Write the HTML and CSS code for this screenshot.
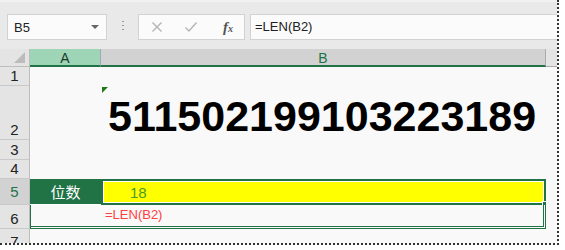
FILE: index.html
```html
<!DOCTYPE html>
<html lang="zh-CN">
<head>
  <meta charset="UTF-8">
  <title>LEN</title>
  <link rel="stylesheet" href="styles.css">
</head>
<body>
  <div class="sheet">
    <!-- 编辑栏 -->
    <div class="toolbar">
      <div class="namebox">
        <span>B5</span>
        <span class="caret"></span>
      </div>
      <div class="grip"></div>
      <div class="fbuttons">
        <svg class="ico" width="12" height="12" viewBox="0 0 12 12"><path d="M1.5 1.5 L10.5 10.5 M10.5 1.5 L1.5 10.5" stroke="#b4b4b4" stroke-width="1.4" fill="none"/></svg>
        <svg class="ico" width="14" height="12" viewBox="0 0 14 12"><path d="M1.5 6.5 L5 10 L12.5 1.5" stroke="#b4b4b4" stroke-width="1.4" fill="none"/></svg>
        <span class="fx">f<small>x</small></span>
      </div>
      <div class="formula">=LEN(B2)</div>
    </div>

    <!-- 表格 -->
    <div class="grid">
      <div class="corner"><span></span></div>
      <div class="colhead sel">A</div>
      <div class="colhead cur">B</div>
      <div class="colhead rest"></div>

      <div class="rowhead">1</div>
      <div class="cell"></div>
      <div class="cell"></div>
      <div class="cell"></div>

      <div class="rowhead">2</div>
      <div class="cell"></div>
      <div class="cell big"><span class="flag"></span>511502199103223189</div>
      <div class="cell"></div>

      <div class="rowhead">3</div>
      <div class="cell"></div>
      <div class="cell"></div>
      <div class="cell"></div>

      <div class="rowhead">4</div>
      <div class="cell"></div>
      <div class="cell"></div>
      <div class="cell"></div>

      <div class="rowhead active">5</div>
      <div class="cell label">位数</div>
      <div class="cell result"><span>18</span><i class="handle"></i></div>
      <div class="cell"></div>

      <div class="rowhead">6</div>
      <div class="cell note">=LEN(B2)</div>
      <div class="cell"></div>

      <div class="rowhead cut">7</div>
      <div class="cell"></div>
      <div class="cell"></div>
      <div class="cell"></div>
    </div>
  </div>
</body>
</html>
```

FILE: styles.css
```css
/* 基础 */
body {
  margin: 0;
  background: #fff;
  font-family: "Liberation Sans", Arial, sans-serif;
}
.sheet {
  width: 557px;
  height: 243px;
  border-right: 2px dotted #333;
  border-bottom: 2px dotted #333;
  overflow: hidden;
  background: #f9f9f9;
}
/* 编辑栏 */
.toolbar {
  height: 49px;
  box-sizing: border-box;
  padding: 12px 0 0 7px;
  display: flex;
  align-items: flex-start;
  background: #e9e9e9;
  border-top: 2px solid #f1f1f1;
}
.namebox {
  width: 100px;
  height: 26px;
  box-sizing: border-box;
  border: 1px solid #d2d2d2;
  background: #fbfbfb;
  display: flex;
  align-items: center;
  justify-content: space-between;
  padding: 0 7px 0 6px;
  font-size: 13px;
  color: #222;
}
.caret {
  width: 0;
  height: 0;
  border-left: 4px solid transparent;
  border-right: 4px solid transparent;
  border-top: 4px solid #666;
}
.grip {
  width: 2px;
  height: 12px;
  margin: 7px 14px 0 15px;
  background: repeating-linear-gradient(#999 0 1px, transparent 1px 4px);
}
.fbuttons {
  width: 107px;
  height: 26px;
  box-sizing: border-box;
  border: 1px solid #d2d2d2;
  background: #fbfbfb;
  display: flex;
  align-items: center;
  padding-left: 12px;
  gap: 21px;
}
.fx {
  font-family: "Liberation Serif", serif;
  font-style: italic;
  font-weight: bold;
  font-size: 15px;
  color: #555;
  margin-left: 4px;
}
.fx small {
  font-size: 10px;
}
.formula {
  flex: 1;
  height: 26px;
  margin-left: 5px;
  box-sizing: border-box;
  border: 1px solid #d2d2d2;
  border-right: none;
  background: #fbfbfb;
  padding-left: 4px;
  line-height: 24px;
  font-size: 13px;
  color: #222;
}
/* 表格 */
.grid {
  display: grid;
  grid-template-columns: 30px 71px 445px 11px;
  grid-template-rows: 18px 19px 54px 20px 19px 26px 24px 14px;
}
.corner {
  background: #e4e4e4;
  border-right: 1px solid #bdbdbd;
  border-bottom: 1px solid #bdbdbd;
  position: relative;
}
.corner span {
  position: absolute;
  right: 4px;
  bottom: 3px;
  width: 0;
  height: 0;
  border-left: 11px solid transparent;
  border-bottom: 11px solid #bcbcbc;
}
.colhead {
  font-size: 14px;
  text-align: center;
  line-height: 18px;
  border-bottom: 2px solid #217346;
  box-sizing: border-box;
}
.colhead.sel {
  background: #9fd5b7;
  color: #1d3b2b;
  border-right: 1px solid #9ab;
}
.colhead.cur {
  background: #d2d2d2;
  color: #217346;
  border-right: 1px solid #aaa;
}
.colhead.rest {
  background: #e4e4e4;
  border-bottom: 1px solid #aaa;
}
.rowhead {
  background: #e4e4e4;
  border-right: 1px solid #bdbdbd;
  border-bottom: 1px solid #c9c9c9;
  box-sizing: border-box;
  font-size: 15px;
  color: #222;
  display: flex;
  align-items: flex-end;
  justify-content: center;
  line-height: 18px;
  overflow: hidden;
}
.rowhead.active {
  background: #d2d2d2;
  color: #217346;
  align-items: center;
}
.rowhead.cut {
  align-items: flex-start;
  padding-top: 4px;
  border-bottom: none;
}
.cell {
  background: #f9f9f9;
  position: relative;
}
.big {
  font-weight: bold;
  font-size: 43px;
  line-height: 43px;
  color: #000;
  display: flex;
  align-items: flex-end;
  padding: 0 0 2px 7px;
  white-space: nowrap;
}
.flag {
  position: absolute;
  top: 1px;
  left: 1px;
  width: 0;
  height: 0;
  border-top: 6px solid #1b7b1b;
  border-right: 6px solid transparent;
}
.label {
  background: #217346;
  color: #fff;
  font-family: "Noto Sans CJK SC", sans-serif;
  font-size: 15px;
  display: flex;
  align-items: center;
  justify-content: center;
  border-bottom: 1px solid #fff;
}
.result {
  background: #ffff00;
  border: 2px solid #217346;
  box-shadow: inset 0 0 0 1px #fff;
  box-sizing: border-box;
  font-size: 15px;
  color: #4a9a20;
  display: flex;
  align-items: center;
  padding-left: 27px;
}
.handle {
  position: absolute;
  right: -5px;
  bottom: -5px;
  width: 5px;
  height: 5px;
  background: #217346;
  border: 1px solid #fff;
}
.note {
  grid-column: 2 / 4;
  border-left: 1px solid #217346;
  border-right: 3px double #217346;
  border-bottom: 3px double #217346;
  font-size: 13px;
  color: #ff4040;
  padding-left: 74px;
  line-height: 20px;
}
```
